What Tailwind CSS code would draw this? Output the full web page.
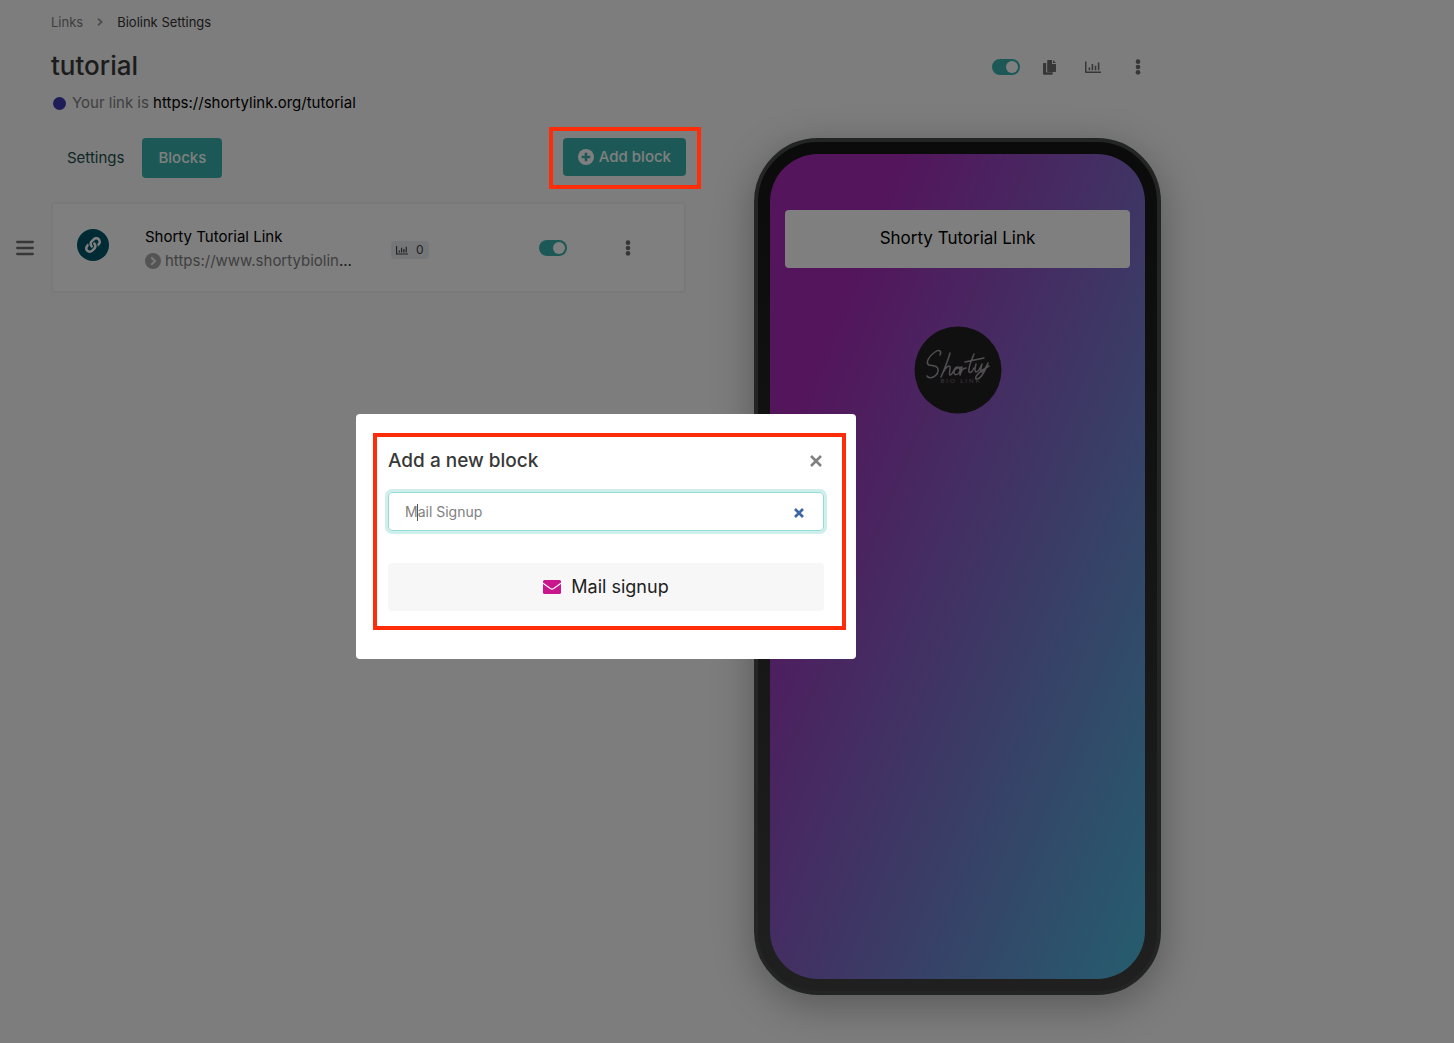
<!DOCTYPE html>
<html lang="en">
<head>
  <meta charset="UTF-8" />
  <meta name="viewport" content="width=device-width, initial-scale=1.0" />
  <title>Biolink Settings - tutorial</title>
  <script src="https://cdn.jsdelivr.net/npm/@tailwindcss/browser@4"></script>
</head>
<body class="bg-[#fafafa] font-['Inter',sans-serif] text-base text-black min-h-screen">

  <svg class="hidden" aria-hidden="true">
    <symbol id="i-chart" viewBox="0 0 16 16"><path fill="currentColor" d="M0 2.500h1.500v10H16V14H.8a.8.8 0 0 1-.8-.8zM3.600 8.500h1.600v2.700H3.600zM6.600 5h1.600v6.200H6.600zM9.700 6.800h1.600v4.400H9.700zM12.800 3.500h1.600v7.700h-1.600z"/></symbol>
    <symbol id="i-dots" viewBox="0 0 6 18"><g fill="currentColor"><circle cx="3" cy="3" r="2.6"/><circle cx="3" cy="9" r="2.6"/><circle cx="3" cy="15" r="2.6"/></g></symbol>
  </svg>

  <div class="max-w-[1212px] pl-[51px] pr-[51px] pt-3">
    <!-- Breadcrumb -->
    <nav aria-label="Breadcrumb">
      <ol class="flex items-center text-[13px] leading-5">
        <li><a href="#" class="text-[#808080]">Links</a></li>
        <li class="mx-[14px]"><svg class="w-[6px] h-2" viewBox="0 0 6 8" fill="none" stroke="#999" stroke-width="1.8"><path d="M1 .7 4.6 4 1 7.3"/></svg></li>
        <li class="text-[#333]">Biolink Settings</li>
      </ol>
    </nav>

    <!-- Title -->
    <header class="flex justify-between items-center mt-4 h-[38px]">
      <h1 class="text-[26px] leading-[34px] pb-[2px] font-medium text-[#383838]">tutorial</h1>
      <div class="flex items-center text-[#6e6e6e] pr-5">
        <label class="flex w-7 h-4"><input type="checkbox" checked aria-label="Link enabled" class="peer sr-only" /><span class="w-7 h-4 rounded-full bg-[#38b2ac] flex justify-end p-[2px]"><span class="size-3 rounded-full bg-white"></span></span></label>
        <button class="ml-[23px]" aria-label="Duplicate"><svg class="w-[14px] h-[15px]" viewBox="0 0 14 15" fill="currentColor"><path d="M5 0h4v4h4v7.200a.8.8 0 0 1-.8.8H5a.8.8 0 0 1-.8-.8V.8A.8.8 0 0 1 5 0zM10 0l3 3h-3zM.8 3h2.400v9.200h6.500V14a.8.8 0 0 1-.8.800H.8A.8.8 0 0 1 0 14V3.800A.8.8 0 0 1 .8 3z"/></svg></button>
        <button class="ml-7" aria-label="Statistics"><svg class="size-4"><use href="#i-chart"/></svg></button>
        <button class="ml-[34px]" aria-label="More"><svg class="w-[6px] h-4"><use href="#i-dots"/></svg></button>
      </div>
    </header>

    <p class="flex items-center mt-[5px] text-[15px] leading-6">
      <span class="size-[13px] rounded-full bg-[#3e3aae] ml-[2px] mr-[6px]"></span>
      <span class="text-[#808080]">Your link is&nbsp;</span><a href="#" class="text-black">https://shortylink.org/tutorial</a>
    </p>

    <main class="flex justify-between items-start mt-[23px]">
      <section class="w-[635px]">
        <div class="flex justify-between items-start">
          <div class="flex items-center gap-[2px] text-[15px]">
            <a href="#" class="px-4 py-2 leading-6 text-[#1d4e4e]">Settings</a>
            <a href="#" class="px-4 py-2 leading-6 rounded bg-[#38b2ac] text-white font-medium">Blocks</a>
          </div>
          <div class="relative">
            <button class="flex items-center gap-[5px] h-[38px] px-[15px] rounded bg-[#38b2ac] text-white text-[15px] font-medium">
              <svg class="size-4" viewBox="0 0 16 16"><circle cx="8" cy="8" r="8" fill="#fff"/><path d="M8 3.700v8.600M3.700 8h8.600" stroke="#38b2ac" stroke-width="2.600"/></svg>
              Add block
            </button>
            <span class="absolute z-20 -left-[14px] -right-[15px] -top-[11px] -bottom-[13px] border-4 border-[#fe2c08]"></span>
          </div>
        </div>

        <!-- Block row -->
        <div class="relative mt-6 h-[91px] rounded border-2 border-[#f3f3f3] bg-white flex items-center">
          <button class="absolute -left-[37px] top-9" aria-label="Reorder"><svg class="w-[18px] h-4" viewBox="0 0 18 16" stroke="#6e6e6e" stroke-width="2.300" stroke-linecap="round"><path d="M1.200 2h15.600M1.200 8h15.600M1.200 14h15.600"/></svg></button>
          <span class="size-8 ml-6 mb-1.5 rounded-full bg-[#00576b] flex items-center justify-center">
            <svg class="size-4" viewBox="0 0 512 512" fill="#fff"><path d="M326.612 185.391c59.747 59.809 58.927 155.698.36 214.590-.11.12-.24.25-.36.370l-67.200 67.200c-59.270 59.270-155.699 59.262-214.960 0-59.270-59.260-59.270-155.700 0-214.960l37.106-37.106c9.840-9.840 26.786-3.300 27.294 10.606.648 17.722 3.826 35.527 9.690 52.721 1.986 5.822.567 12.262-3.783 16.612l-13.087 13.087c-28.026 28.026-28.905 73.660-1.155 101.960 28.024 28.579 74.086 28.749 102.325.51l67.200-67.190c28.191-28.191 28.073-73.757 0-101.830-3.701-3.694-7.429-6.564-10.341-8.569a16.037 16.037 0 0 1-6.947-12.606c-.396-10.567 3.348-21.456 11.698-29.806l21.054-21.055c5.521-5.521 14.182-6.199 20.584-1.731a152.482 152.482 0 0 1 20.522 17.197zM467.547 44.449c-59.261-59.262-155.690-59.270-214.960 0l-67.200 67.200c-.12.12-.25.25-.36.370-58.566 58.892-59.387 154.781.36 214.590a152.454 152.454 0 0 0 20.521 17.196c6.402 4.468 15.064 3.789 20.584-1.731l21.054-21.055c8.350-8.350 12.094-19.239 11.698-29.806a16.037 16.037 0 0 0-6.947-12.606c-2.912-2.005-6.640-4.875-10.341-8.569-28.073-28.073-28.191-73.639 0-101.830l67.200-67.190c28.239-28.239 74.300-28.069 102.325.51 27.750 28.300 26.872 73.934-1.155 101.960l-13.087 13.087c-4.350 4.350-5.769 10.790-3.783 16.612 5.864 17.194 9.042 34.999 9.690 52.721.509 13.906 17.454 20.446 27.294 10.606l37.106-37.106c59.271-59.259 59.271-155.699.001-214.959z"/></svg>
          </span>
          <div class="w-[212px] ml-9 mt-0.5 text-[15px] leading-6">
            <a href="#" class="block text-black">Shorty Tutorial Link</a>
            <p class="flex items-center gap-1 text-[#808080]">
              <svg class="size-4 shrink-0" viewBox="0 0 16 16"><circle cx="8" cy="8" r="8" fill="#a8a8a8"/><path d="M6.300 4.300 10 8l-3.700 3.700" fill="none" stroke="#f3f3f3" stroke-width="2"/></svg>
              <span class="truncate">https://www.shortybiolin<span class="text-[#333]">...</span></span>
            </p>
          </div>
          <span class="flex items-center gap-2 ml-[34px] mt-1 px-[5px] h-[18px] rounded bg-[#e9ecef] text-[#444] text-xs"><svg class="size-3"><use href="#i-chart"/></svg>0</span>
          <label class="flex w-7 h-4 ml-auto"><input type="checkbox" checked aria-label="Block enabled" class="peer sr-only" /><span class="w-7 h-4 rounded-full bg-[#38b2ac] flex justify-end p-[2px]"><span class="size-3 rounded-full bg-white"></span></span></label>
          <button class="ml-[58px] mr-[53px] text-[#6e6e6e]" aria-label="Block options"><svg class="w-[6px] h-4"><use href="#i-dots"/></svg></button>
        </div>
      </section>

      <!-- Phone preview -->
      <aside class="w-[407px] h-[857px] rounded-[64px] border-4 border-[#464848] bg-linear-to-b from-[#161616] to-[#404040] p-3 shadow-[0_10px_40px_rgba(0,0,0,0.3)]">
        <div class="h-full rounded-[48px] bg-[linear-gradient(112deg,#a82ab8_18%,#50b4dc_96%)] px-[15px] pt-14 flex flex-col items-center">
          <a href="#" class="w-full h-[58px] rounded bg-white flex items-center justify-center text-[17px] text-black">Shorty Tutorial Link</a>
          <svg class="size-[88px] mt-[58px]" viewBox="0 0 88 88" role="img" aria-label="Shorty Bio Link">
            <circle cx="44" cy="44" r="43.500" fill="#232023"/>
            <g fill="none" stroke="#a09ca2" stroke-width="1.500" stroke-linecap="round" stroke-linejoin="round">
              <path d="M26 29c2-4-1-6-5-3-6 4-10 11-6 13 4 1 8 0 9 4 1 6-8 12-11 7"/>
              <path d="M36 27c-2 8-6 17-9 24 3-7 6-11 8-11 3 0-1 8 1 9 2 0 3-3 4-5 2-4 6-4 6 0-1 6-7 6-6 1 1-3 4-3 8-4-1 3-2 6-2 8 1-4 3-7 6-7M60 28c-3 7-6 15-5 18 2 2 4-2 5-4M62 38c-1 4-2 7 0 8 3 0 4-4 6-8-1 4-2 6-1 8 3 0 5-5 7-9-3 8-8 17-12 16-2-3 6-9 13-13M51 36l19-4"/>
            </g>
            <text x="47" y="57" text-anchor="middle" font-family="Lato" font-size="6" letter-spacing="2" fill="#77737a">BIO LINK</text>
          </svg>
        </div>
      </aside>
    </main>
  </div>

  <!-- Modal -->
  <div class="fixed inset-0 z-10 bg-black/50">
    <div class="max-w-[1212px] h-full flex items-center justify-center pt-[30px]">
      <div role="dialog" aria-labelledby="modal-title" class="relative w-[500px] rounded bg-white px-8 pt-8 pb-12">
        <div class="flex justify-between items-center h-[30px]">
          <h2 id="modal-title" class="text-[19px] font-medium text-[#383838]">Add a new block</h2>
          <button class="mr-[2px]" aria-label="Close"><svg class="size-3" viewBox="0 0 12 12" stroke="#808080" stroke-width="2.600"><path d="M1 1l10 10M11 1 1 11"/></svg></button>
        </div>
        <div class="relative mt-4">
          <input type="text" value="Mail Signup" aria-label="Search blocks" class="block w-full h-[39px] px-4 rounded border border-[#92dbd6] ring-3 ring-[#d0eeec] text-sm text-[#808080] outline-none" />
          <span class="absolute left-[29px] top-3 w-px h-[17px] bg-[#555]"></span>
          <button class="absolute right-5 top-4" aria-label="Clear search"><svg class="size-[10px]" viewBox="0 0 10 10" stroke="#3b67a5" stroke-width="2.600"><path d="M1 1l8 8M9 1 1 9"/></svg></button>
        </div>
        <button class="mt-8 w-full h-12 rounded bg-[#f7f7f7] flex items-center justify-center gap-[10px] text-lg text-[#212121]">
          <svg class="w-[18px] h-[14px]" viewBox="0 0 18 14"><rect width="18" height="14" rx="1.500" fill="#ca168c"/><path d="M0 3.300 7.300 8.600q1.700 1 3.400 0L18 3.300" fill="none" stroke="#f7f7f7" stroke-width="1.200"/></svg>
          Mail signup
        </button>
        <span class="absolute left-[17px] right-[10px] top-[19px] bottom-[29px] border-4 border-[#fe2c08] pointer-events-none"></span>
      </div>
    </div>
  </div>
</body>
</html>
